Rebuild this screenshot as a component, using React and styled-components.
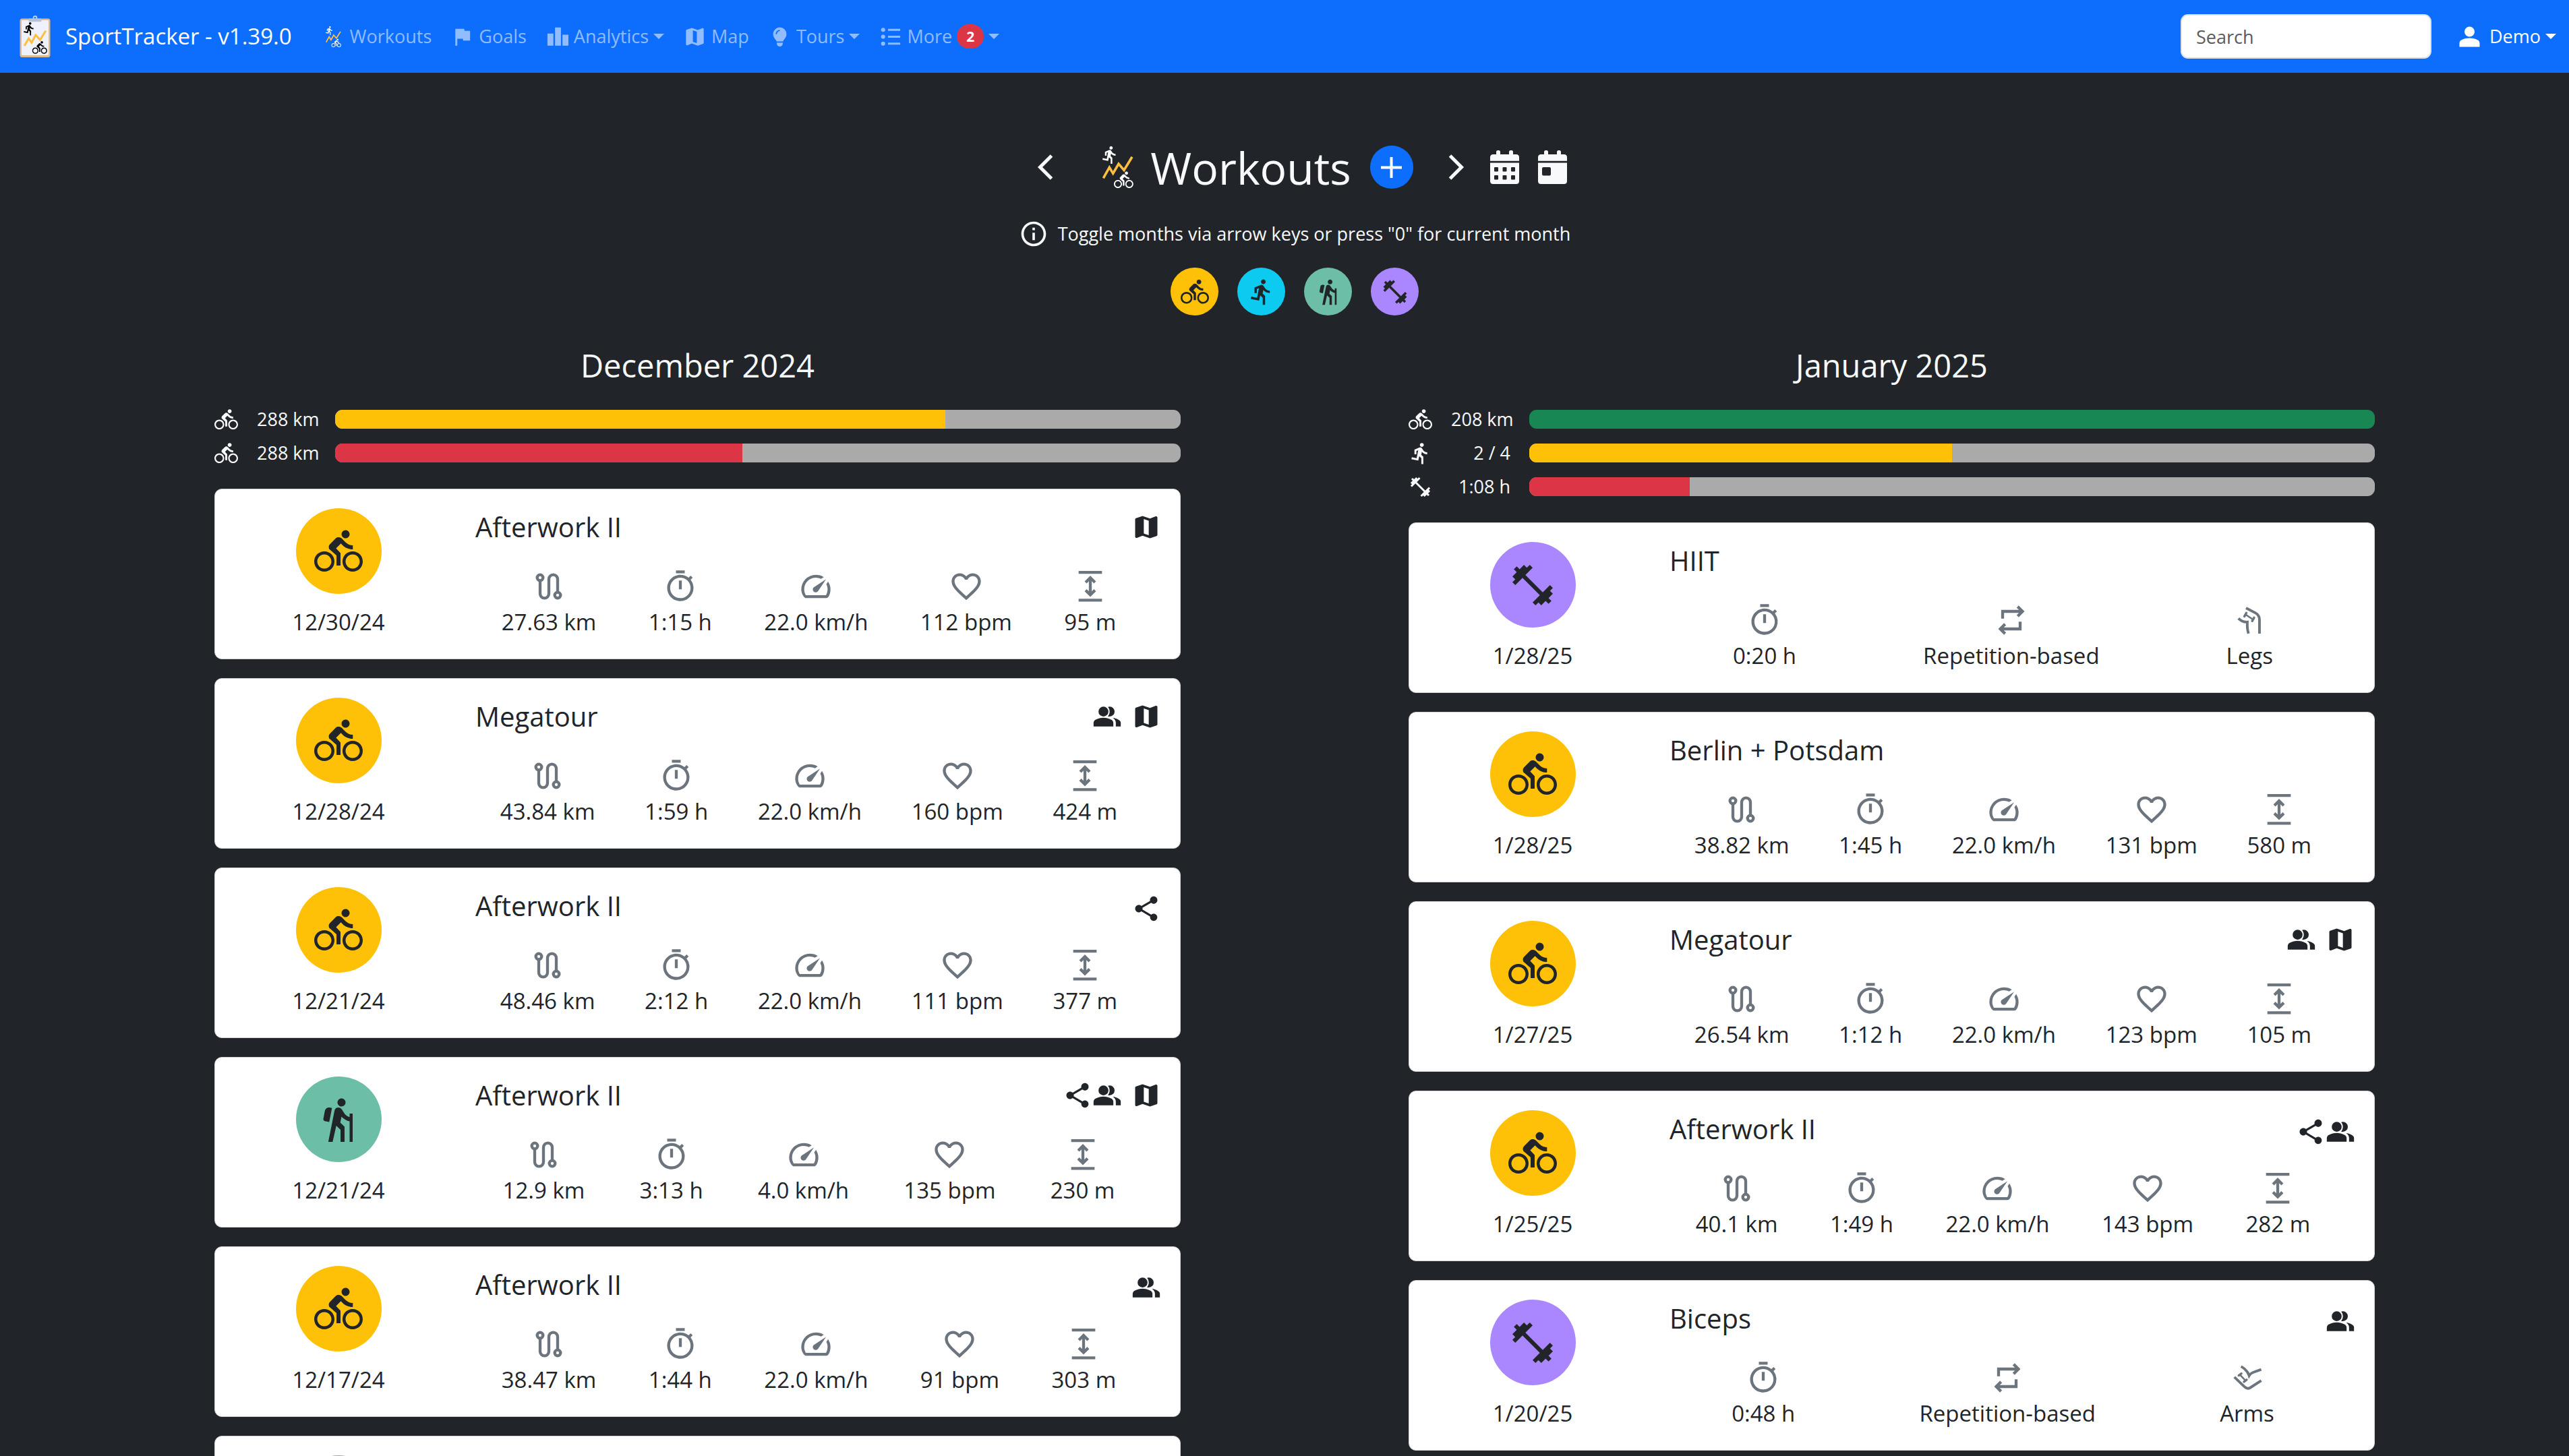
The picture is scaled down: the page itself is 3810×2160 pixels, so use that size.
import React from "react";
import styled, { createGlobalStyle } from "styled-components";
import {
  MdDirectionsBike,
  MdDirectionsRun,
  MdHiking,
  MdFitnessCenter,
  MdFlag,
  MdShare,
  MdOutlineTimer,
  MdFavoriteBorder,
  MdInfoOutline,
} from "react-icons/md";

const color = {
  blue: "#0d6efd",
  dark: "#212529",
  light: "#f8f9fa",
  grey: "#6c757d",
  yellow: "#ffc107",
  cyan: "#0dcaf0",
  green: "#198754",
  teal: "#6cbea7",
  purple: "#aa86ff",
  red: "#dc3545",
};

const GlobalStyle = createGlobalStyle`
  *, *::before, *::after { box-sizing: border-box; }
  body {
    margin: 0;
    background: ${color.dark};
    color: ${color.light};
    font-family: "Open Sans", "Noto Sans", sans-serif;
    font-size: 27px;
    line-height: 42px;
    overflow-x: hidden;
  }
  svg { display: block; flex: none; }
  h1, h2, h3, p, ul { margin: 0; padding: 0; font-weight: 400; }
  a { color: inherit; text-decoration: none; }
  button, input { font: inherit; }
`;

/* ---------- icons ---------- */

const Glyph = ({ size, children, ...rest }) => (
  <svg width={size} height={size} viewBox="0 0 24 24" fill="currentColor" aria-hidden="true" {...rest}>
    {children}
  </svg>
);

const MapIcon = ({ size }) => (
  <Glyph size={size}>
    <path d="m15 21-6-2.1-4.65 1.8q-.5.2-.92-.11Q3 20.28 3 19.75v-14q0-.33.19-.58.19-.25.51-.38L9 3l6 2.1 4.65-1.8q.5-.2.93.11.42.31.42.84v14q0 .33-.19.58-.19.25-.51.38zm-1-2.45V6.85l-4-1.4v11.7z" />
  </Glyph>
);

const GroupIcon = ({ size }) => (
  <Glyph size={size}>
    <circle cx="9" cy="8" r="4" />
    <path d="M1 20v-2.8q0-.85.44-1.56.44-.71 1.16-1.09 1.55-.77 3.15-1.16T9 13t3.25.39 3.15 1.16q.73.38 1.16 1.09.44.71.44 1.56V20z" />
    <path d="M19 20v-3q0-1.1-.61-2.11-.61-1.01-1.74-1.74 1.27.15 2.4.51 1.13.36 2.1.89.9.5 1.37 1.11.48.61.48 1.34v3z" />
    <path d="M18 8q0 1.65-1.17 2.83T14 12q-.27 0-.7-.06t-.7-.14q.68-.8 1.04-1.78T14 8q0-1.05-.36-2.02T12.6 4.2q.35-.13.7-.16T14 4q1.65 0 2.83 1.17T18 8z" />
  </Glyph>
);

const PersonIcon = ({ size }) => (
  <Glyph size={size}>
    <circle cx="12" cy="8" r="4" />
    <path d="M4 20v-2.8q0-.85.44-1.56.44-.71 1.16-1.09 1.55-.77 3.15-1.16T12 13t3.25.39 3.15 1.16q.73.38 1.16 1.09.44.71.44 1.56V20z" />
  </Glyph>
);

const BarsIcon = ({ size }) => (
  <Glyph size={size}>
    <path d="M2 8.7h6V21H2zM9.7 2.5h6V21h-6zM17.3 10h6v11h-6z" />
  </Glyph>
);

const BulbIcon = ({ size }) => (
  <Glyph size={size}>
    <path d="M12 2.4a6.8 6.8 0 0 0-6.8 6.8c0 2.6 1.3 4.3 2.6 5.8.6.7.9 1.3 1 1.8h6.4c.1-.5.4-1.1 1-1.8 1.3-1.5 2.6-3.2 2.6-5.8A6.8 6.8 0 0 0 12 2.4zM9 18h6v1a3 3 0 0 1-6 0z" />
    <path d="M8.4 9.4A3.7 3.7 0 0 1 12 5.6" fill="none" stroke={color.blue} strokeWidth="1.3" />
  </Glyph>
);

const ListIcon = ({ size }) => (
  <Glyph size={size}>
    <circle cx="4.6" cy="5" r="2.1" />
    <circle cx="4.6" cy="12" r="2.1" />
    <circle cx="4.6" cy="19" r="2.1" />
    <path d="M9.6 4h12.4v2H9.6zM9.6 11h12.4v2H9.6zM9.6 18h12.4v2H9.6z" />
  </Glyph>
);

const RouteIcon = ({ size }) => (
  <Glyph size={size}>
    <g fill="none" stroke="currentColor" strokeWidth="2">
      <circle cx="6" cy="6" r="2" />
      <circle cx="18" cy="18" r="2" />
      <path d="M6 8v9a3 3 0 0 0 6 0V7a3 3 0 0 1 6 0v9" />
    </g>
  </Glyph>
);

const SpeedIcon = ({ size }) => (
  <Glyph size={size}>
    <path d="M10.45 15.5q.6.6 1.55.59t1.4-.69L19 7l-8.4 5.6q-.68.45-.71 1.38-.03.93.56 1.52z" />
    <path d="M12 4q1.48 0 2.84.41 1.36.41 2.56 1.24l-1.9 1.2q-.83-.43-1.71-.64Q12.9 6 12 6 8.67 6 6.34 8.34 4 10.68 4 14q0 1.05.29 2.07.29 1.03.81 1.93h13.8q.57-.95.84-1.97T20 13.9q0-.9-.21-1.75-.21-.85-.64-1.65l1.2-1.9q.75 1.18 1.19 2.5.44 1.33.46 2.75.02 1.43-.33 2.72-.35 1.3-1.03 2.48-.28.45-.75.7T18.7 20H5.3q-.53 0-.8-.25-.47-.25-.75-.7Q2 16.8 2 14q0-2.08.79-3.89.79-1.81 2.15-3.17T8.12 4.79Q9.93 4 12 4z" />
  </Glyph>
);

const ElevationIcon = ({ size }) => (
  <Glyph size={size}>
    <path d="M4 1.4h16v2H4zM4 20.4h16v2H4zM12 19.2l-3.9-3.9 1.4-1.4 1.5 1.5V8.4L9.5 9.9 8.1 8.5 12 4.6l3.9 3.9-1.4 1.4L13 8.4v7l1.5-1.5 1.4 1.4z" />
  </Glyph>
);

const RepeatIcon = ({ size }) => (
  <Glyph size={size}>
    <path d="m7 22-4-4 4-4 1.4 1.45L6.85 17H17v-4h2v6H6.85l1.55 1.55zM5 11V5h12.15L15.6 3.45 17 2l4 4-4 4-1.4-1.45L17.15 7H7v4z" />
  </Glyph>
);

const LegIcon = ({ size }) => (
  <Glyph size={size}>
    <g fill="none" stroke="currentColor" strokeWidth="1.8">
      <path d="M9.7 3.7 16.4 7.2q2.5 1.5 2.5 4.6v9.4" />
      <path d="M4.5 10.8q2.6 2.7 6.1 2.5-.3 4.4.8 7.9" />
      <path d="m9.6 8.3 4.5 3" strokeWidth="1.2" />
      <path d="M9.9 7.1 8.6 9.4M15.2 10.3l-1.3 2.3" strokeWidth="1.6" strokeLinecap="round" />
    </g>
  </Glyph>
);

const ArmIcon = ({ size }) => (
  <Glyph size={size}>
    <g fill="none" stroke="currentColor" strokeWidth="1.8">
      <path d="M7.7 4.2q4.3 2.4 5.5 6.3.9-1.6 2.7-2.2l5.6-2" />
      <path d="m3.1 11.5 7.2 6.9q1.8 1.5 3.6.4l7.6-4.9" />
      <path d="m7 10 3.6 3.8" strokeWidth="1.2" />
      <path d="M7.9 9.1 6.1 10.4M11.5 13.3l-1.8 1.4" strokeWidth="1.6" strokeLinecap="round" />
    </g>
  </Glyph>
);

const PlusIcon = () => (
  <svg width="31" height="31" viewBox="0 0 31 31" fill="currentColor" aria-hidden="true">
    <path d="M13.5 0h4v13.5H31v4H17.5V31h-4V17.5H0v-4h13.5z" />
  </svg>
);

const Chevron = ({ right }) => (
  <svg width="24" height="38" viewBox="0 0 24 38" fill="none" stroke="currentColor" strokeWidth="5" aria-hidden="true">
    <path d={right ? "M2.5 2 19.5 19 2.5 36" : "M21.5 2 4.5 19l17 17"} />
  </svg>
);

const CalendarIcon = ({ single }) => (
  <svg width="43" height="50" viewBox="0 0 43 50" fill="currentColor" aria-hidden="true">
    <rect x="9" y="0" width="6" height="12" rx="2.5" />
    <rect x="28" y="0" width="6" height="12" rx="2.5" />
    <path d="M0 15.8V10.5Q0 6 4.5 6h34Q43 6 43 10.5v5.3z" />
    <path
      fillRule="evenodd"
      d={
        "M0 18.6h43v26.9q0 4.5-4.5 4.5h-34Q0 50 0 45.5z" +
        (single
          ? "M8 25h9q2 0 2 2v8.5q0 2-2 2H8q-2 0-2-2V27q0-2 2-2z"
          : [6, 18.5, 31]
              .flatMap((x) => [25, 37].map((y) => `M${x} ${y + 1}q0-1 1-1h4q1 0 1 1v4.5q0 1-1 1h-4q-1 0-1-1z`))
              .join(""))
      }
    />
  </svg>
);

const RUNNER =
  "M13.49 5.48c1.1 0 2-.9 2-2s-.9-2-2-2-2 .9-2 2 .9 2 2 2zm-3.6 13.9 1-4.4 2.1 2v6h2v-7.5l-2.1-2 .6-3c1.3 1.5 3.3 2.5 5.5 2.5v-2c-1.9 0-3.5-1-4.3-2.4l-1-1.6c-.4-.6-1-1-1.7-1-.3 0-.5.1-.8.1l-5.2 2.2v4.7h2v-3.4l1.8-.7-1.6 8.1-4.9-1-.4 2 7 1.4z";
const CYCLIST =
  "M15.5 5.5c1.1 0 2-.9 2-2s-.9-2-2-2-2 .9-2 2 .9 2 2 2zM5 12c-2.8 0-5 2.2-5 5s2.2 5 5 5 5-2.2 5-5-2.2-5-5-5zm0 8.5c-1.9 0-3.5-1.6-3.5-3.5s1.6-3.5 3.5-3.5 3.5 1.6 3.5 3.5-1.6 3.5-3.5 3.5zm5.8-10 2.4-2.4.8.8c1.3 1.3 3 2.1 5.1 2.1V9c-1.5 0-2.7-.6-3.6-1.5l-1.9-1.9c-.5-.4-1-.6-1.6-.6s-1.1.2-1.4.6L7.8 8.4c-.4.4-.6.9-.6 1.4 0 .6.2 1.1.6 1.4L11 14v5h2v-6.2l-2.2-2.3zM19 12c-2.8 0-5 2.2-5 5s2.2 5 5 5 5-2.2 5-5-2.2-5-5-5zm0 8.5c-1.9 0-3.5-1.6-3.5-3.5s1.6-3.5 3.5-3.5 3.5 1.6 3.5 3.5-1.6 3.5-3.5 3.5z";

const SportsMark = ({ width, height }) => (
  <svg width={width} height={height} viewBox="0 0 46 62" fill="#fff" aria-hidden="true">
    <path d={RUNNER} transform="translate(-3.5 -1.8) scale(1.21)" />
    <path d="m1.3 47.3 9-16 5.4 9L24 26l8 9.5 12-19.8" fill="none" stroke="#ffbe3c" strokeWidth="3.6" />
    <path d={CYCLIST} transform="translate(17 35.6) scale(1.2)" />
  </svg>
);

const ClipboardLogo = () => (
  <svg width="46" height="62" viewBox="0 0 45 62" aria-hidden="true">
    <rect x="0" y="4.5" width="45" height="57.5" rx="3.5" fill="#dfbb92" />
    <rect x="2.5" y="7" width="40" height="52" rx="1" fill="#eff1fb" />
    <circle cx="22.5" cy="3.4" r="2.4" fill="none" stroke="#c3cde6" strokeWidth="1.8" />
    <rect x="13" y="4.5" width="19" height="4.8" rx="1" fill="#b6c1dd" />
    <path d={RUNNER} transform="translate(3.1 8.7) scale(.9)" />
    <path d="m6.7 45 6.3-11 4.3 6.3L23.3 29l6.7 7 8.3-13.3" fill="none" stroke="#ffbe3c" strokeWidth="3" />
    <path d={CYCLIST} transform="translate(18.3 36.5) scale(.92)" />
  </svg>
);

/* ---------- navigation ---------- */

const Navbar = styled.nav`
  display: flex;
  align-items: center;
  height: 108px;
  padding: 0 5px 0 29px;
  background: ${color.blue};
`;

const Brand = styled.a`
  display: flex;
  align-items: center;
  gap: 22px;
  margin-right: 30px;
  font-size: 33px;
  color: #fff;
`;

const NavLinks = styled.div`
  display: flex;
  flex: 1;
`;

const NavLink = styled.a`
  display: flex;
  align-items: center;
  gap: 7px;
  padding: 14px;
  color: ${(p) => (p.$bright ? "#fff" : "rgba(255, 255, 255, 0.55)")};
`;

const Caret = styled.span`
  border: 8px solid transparent;
  border-top-color: currentColor;
  border-bottom: 0;
`;

const CountBadge = styled.span`
  padding: 0 14px;
  border-radius: 18px;
  background: ${color.red};
  color: #fff;
  font-size: 21px;
  font-weight: 700;
  line-height: 36px;
`;

const SearchBox = styled.input`
  width: 372px;
  height: 66px;
  margin-right: 20px;
  padding: 0 21px;
  border: 2px solid #dee2e6;
  border-radius: 11px;
  background: #fff;
  color: ${color.dark};
  &::placeholder { color: #595c5f; opacity: 1; }
`;

/* ---------- header ---------- */

const Main = styled.main`
  padding: 98px 119px 0 149px;
`;

const TitleRow = styled.header`
  display: flex;
  align-items: center;
  justify-content: center;
  height: 84px;
  padding-left: 12px;
`;

const PlainButton = styled.button`
  display: grid;
  place-items: center;
  width: ${(p) => p.$width}px;
  height: 64px;
  padding: 0;
  border: 0;
  background: none;
  color: ${color.light};
`;

const PageTitle = styled.h1`
  display: flex;
  align-items: center;
  gap: 25px;
  margin: 0 28px 0 63px;
  font-size: 66px;
  line-height: 84px;
`;

const CircleButton = styled.button`
  display: grid;
  place-items: center;
  width: ${(p) => p.$size}px;
  height: ${(p) => p.$size}px;
  padding: 0;
  border: 0;
  border-radius: 50%;
  background: ${(p) => p.$fill};
  color: ${(p) => p.$ink || color.dark};
`;

const AfterTitle = styled.div`
  display: flex;
  gap: 28px;
  margin-left: 42px;
`;

const Hint = styled.p`
  display: flex;
  align-items: center;
  justify-content: center;
  gap: 14px;
  margin-top: 35px;
`;

const Filters = styled.div`
  display: flex;
  justify-content: center;
  gap: 28px;
  margin-top: 28px;
`;

/* ---------- months ---------- */

const Months = styled.div`
  display: grid;
  grid-template-columns: 1fr 1fr;
  align-items: start;
  margin-top: 44px;
`;

const Month = styled.section`
  padding: 0 169px;
`;

const MonthTitle = styled.h2`
  margin-bottom: 29px;
  font-size: 47px;
  line-height: 60px;
  text-align: center;
`;

const Goals = styled.div`
  display: grid;
  gap: 8px;
  margin-bottom: 32px;
`;

const Goal = styled.div`
  display: grid;
  grid-template-columns: 35px 88px 1fr;
  align-items: center;
  column-gap: 28px;
`;

const GoalLabel = styled.span`
  text-align: right;
  white-space: nowrap;
`;

const Track = styled.div`
  height: 28px;
  border-radius: 11px;
  background: #aaa;
  overflow: hidden;
`;

const Fill = styled.div`
  height: 100%;
  background: ${(p) => p.$fill};
`;

const Cards = styled.div`
  display: grid;
  gap: 28px;
`;

const Card = styled.article`
  display: grid;
  grid-template-columns: 310px 1fr;
  column-gap: 48px;
  height: 253px;
  padding: 28px;
  border: 1px solid #d3d4d5;
  border-radius: 11px;
  background: #fff;
  color: ${color.dark};
  font-size: 33px;
`;

const Kind = styled.div`
  display: flex;
  flex-direction: column;
  align-items: center;
  gap: 21px;
`;

const KindDot = styled.div`
  display: grid;
  place-items: center;
  width: 127px;
  height: 127px;
  border-radius: 50%;
  background: ${(p) => p.$fill};
`;

const Details = styled.div`
  display: flex;
  flex-direction: column;
  gap: 34px;
`;

const CardHead = styled.div`
  display: flex;
  justify-content: space-between;
  height: 56px;
`;

const CardTitle = styled.h3`
  font-size: 40px;
  line-height: 56px;
`;

const Badges = styled.div`
  display: flex;
  padding-top: ${(p) => (p.$withMap ? 6 : 10)}px;
`;

const MapLink = styled.a`
  margin-left: 14px;
`;

const Metrics = styled.ul`
  display: flex;
  justify-content: space-around;
  padding-right: 28px;
  list-style: none;
`;

const Metric = styled.li`
  display: flex;
  flex-direction: column;
  align-items: center;
  gap: 6px;
  svg { color: ${color.grey}; }
`;

/* ---------- data ---------- */

const sports = {
  bike: { name: "Biking", fill: color.yellow, Icon: MdDirectionsBike },
  run: { name: "Running", fill: color.cyan, Icon: MdDirectionsRun },
  hike: { name: "Hiking", fill: color.teal, Icon: MdHiking },
  fit: { name: "Fitness", fill: color.purple, Icon: MdFitnessCenter },
};

const enduranceIcons = [RouteIcon, MdOutlineTimer, SpeedIcon, MdFavoriteBorder, ElevationIcon];

const fitnessIcons = (bodyPart) => [MdOutlineTimer, RepeatIcon, bodyPart === "Arms" ? ArmIcon : LegIcon];

const months = [
  {
    title: "December 2024",
    goals: [
      { sport: "bike", label: "288 km", percent: 72.2, fill: color.yellow },
      { sport: "bike", label: "288 km", percent: 48.2, fill: color.red },
    ],
    workouts: [
      { sport: "bike", date: "12/30/24", title: "Afterwork II", map: true, values: ["27.63 km", "1:15 h", "22.0 km/h", "112 bpm", "95 m"] },
      { sport: "bike", date: "12/28/24", title: "Megatour", group: true, map: true, values: ["43.84 km", "1:59 h", "22.0 km/h", "160 bpm", "424 m"] },
      { sport: "bike", date: "12/21/24", title: "Afterwork II", share: true, values: ["48.46 km", "2:12 h", "22.0 km/h", "111 bpm", "377 m"] },
      { sport: "hike", date: "12/21/24", title: "Afterwork II", share: true, group: true, map: true, values: ["12.9 km", "3:13 h", "4.0 km/h", "135 bpm", "230 m"] },
      { sport: "bike", date: "12/17/24", title: "Afterwork II", group: true, values: ["38.47 km", "1:44 h", "22.0 km/h", "91 bpm", "303 m"] },
      { sport: "fit", values: [] },
    ],
  },
  {
    title: "January 2025",
    goals: [
      { sport: "bike", label: "208 km", percent: 100, fill: color.green },
      { sport: "run", label: "2 / 4", percent: 50, fill: color.yellow },
      { sport: "fit", label: "1:08 h", percent: 19, fill: color.red },
    ],
    workouts: [
      { sport: "fit", date: "1/28/25", title: "HIIT", values: ["0:20 h", "Repetition-based", "Legs"] },
      { sport: "bike", date: "1/28/25", title: "Berlin + Potsdam", values: ["38.82 km", "1:45 h", "22.0 km/h", "131 bpm", "580 m"] },
      { sport: "bike", date: "1/27/25", title: "Megatour", group: true, map: true, values: ["26.54 km", "1:12 h", "22.0 km/h", "123 bpm", "105 m"] },
      { sport: "bike", date: "1/25/25", title: "Afterwork II", share: true, group: true, values: ["40.1 km", "1:49 h", "22.0 km/h", "143 bpm", "282 m"] },
      { sport: "fit", date: "1/20/25", title: "Biceps", group: true, values: ["0:48 h", "Repetition-based", "Arms"] },
    ],
  },
];

/* ---------- views ---------- */

const TopBar = () => (
  <Navbar>
    <Brand href="#home">
      <ClipboardLogo />
      SportTracker - v1.39.0
    </Brand>
    <NavLinks>
      <NavLink href="#workouts">
        <SportsMark width={35} height={31} />
        Workouts
      </NavLink>
      <NavLink href="#goals">
        <MdFlag size={35} />
        Goals
      </NavLink>
      <NavLink href="#analytics">
        <BarsIcon size={35} />
        Analytics
        <Caret />
      </NavLink>
      <NavLink href="#map">
        <MapIcon size={35} />
        Map
      </NavLink>
      <NavLink href="#tours">
        <BulbIcon size={35} />
        Tours
        <Caret />
      </NavLink>
      <NavLink href="#more">
        <ListIcon size={35} />
        More
        <CountBadge>2</CountBadge>
        <Caret />
      </NavLink>
    </NavLinks>
    <SearchBox type="search" placeholder="Search" aria-label="Search" />
    <NavLink href="#profile" $bright>
      <PersonIcon size={45} />
      Demo
      <Caret />
    </NavLink>
  </Navbar>
);

const Workout = ({ sport, date, title, share, group, map, values }) => {
  const { fill, Icon } = sports[sport];
  const icons = sport === "fit" ? fitnessIcons(values[2]) : enduranceIcons;
  return (
    <Card>
      <Kind>
        <KindDot $fill={fill}>
          <Icon size={72} />
        </KindDot>
        <time>{date}</time>
      </Kind>
      <Details>
        <CardHead>
          <CardTitle>{title}</CardTitle>
          <Badges $withMap={map}>
            {share && <MdShare size={44} />}
            {group && <GroupIcon size={44} />}
            {map && (
              <MapLink href="#route" aria-label="Show on map">
                <MapIcon size={44} />
              </MapLink>
            )}
          </Badges>
        </CardHead>
        <Metrics>
          {values.map((value, i) => {
            const MetricIcon = icons[i];
            return (
              <Metric key={i}>
                <MetricIcon size={52} />
                {value}
              </Metric>
            );
          })}
        </Metrics>
      </Details>
    </Card>
  );
};

export default function App() {
  return (
    <>
      <GlobalStyle />
      <TopBar />
      <Main>
        <TitleRow>
          <PlainButton $width={44} aria-label="Previous month">
            <Chevron />
          </PlainButton>
          <PageTitle>
            <SportsMark width={46} height={62} />
            Workouts
          </PageTitle>
          <CircleButton $size={64} $fill={color.blue} $ink="#fff" aria-label="Add workout">
            <PlusIcon />
          </CircleButton>
          <AfterTitle>
            <PlainButton $width={44} aria-label="Next month">
              <Chevron right />
            </PlainButton>
            <PlainButton $width={43} aria-label="Choose month">
              <CalendarIcon />
            </PlainButton>
            <PlainButton $width={43} aria-label="Current month">
              <CalendarIcon single />
            </PlainButton>
          </AfterTitle>
        </TitleRow>
        <Hint>
          <MdInfoOutline size={44} />
          Toggle months via arrow keys or press "0" for current month
        </Hint>
        <Filters>
          {Object.values(sports).map(({ name, fill, Icon }) => (
            <CircleButton key={name} $size={71} $fill={fill} aria-label={name}>
              <Icon size={42} />
            </CircleButton>
          ))}
        </Filters>
        <Months>
          {months.map((month) => (
            <Month key={month.title}>
              <MonthTitle>{month.title}</MonthTitle>
              <Goals>
                {month.goals.map((goal, i) => {
                  const { Icon } = sports[goal.sport];
                  return (
                    <Goal key={i}>
                      <Icon size={35} />
                      <GoalLabel>{goal.label}</GoalLabel>
                      <Track role="progressbar" aria-label={goal.label} aria-valuenow={goal.percent}>
                        <Fill $fill={goal.fill} style={{ width: `${goal.percent}%` }} />
                      </Track>
                    </Goal>
                  );
                })}
              </Goals>
              <Cards>
                {month.workouts.map((workout, i) => (
                  <Workout key={i} {...workout} />
                ))}
              </Cards>
            </Month>
          ))}
        </Months>
      </Main>
    </>
  );
}
